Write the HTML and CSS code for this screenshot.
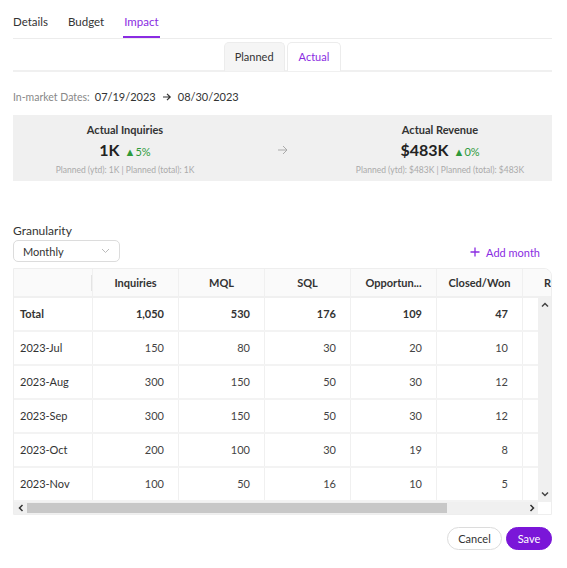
FILE: index.html
```html
<!DOCTYPE html>
<html>
<head>
<meta charset="utf-8">
<link rel="stylesheet" href="styles.css">
</head>
<body>
<div class="page">
  <nav class="tabs">
    <span class="tab">Details</span>
    <span class="tab">Budget</span>
    <span class="tab active">Impact</span>
  </nav>
  <div class="subtabs">
    <span class="subtab">Planned</span>
    <span class="subtab active">Actual</span>
  </div>
  <div class="dates">
    <span class="dates-label">In-market Dates:</span>
    <span class="dates-val">07/19/2023</span>
    <svg class="dates-arrow" width="10" height="10" viewBox="0 0 10 10"><path d="M1 5h7M5 1.8 8.2 5 5 8.2" fill="none" stroke="#333" stroke-width="1.2"/></svg>
    <span class="dates-val">08/30/2023</span>
  </div>
  <div class="summary">
    <div class="metric">
      <div class="metric-title">Actual Inquiries</div>
      <div class="metric-value"><span class="big">1K</span><span class="delta">&#9650;5%</span></div>
      <div class="metric-sub">Planned (ytd): 1K | Planned (total): 1K</div>
    </div>
    <div class="summary-arrow">
      <svg width="12" height="10" viewBox="0 0 12 10"><path d="M1 5h9M6 1l4 4-4 4" fill="none" stroke="#aaa" stroke-width="1"/></svg>
    </div>
    <div class="metric">
      <div class="metric-title">Actual Revenue</div>
      <div class="metric-value"><span class="big">$483K</span><span class="delta">&#9650;0%</span></div>
      <div class="metric-sub">Planned (ytd): $483K | Planned (total): $483K</div>
    </div>
  </div>
  <div class="gran-label">Granularity</div>
  <div class="controls">
    <div class="select">
      <span>Monthly</span>
      <svg width="9" height="6" viewBox="0 0 9 6"><path d="M1 1l3.5 3.5L8 1" fill="none" stroke="#bbb" stroke-width="1"/></svg>
    </div>
    <div class="add">
      <svg width="10" height="10" viewBox="0 0 10 10"><path d="M5 0.5v9M0.5 5h9" stroke="#8a2be2" stroke-width="1.3"/></svg>
      <span>Add month</span>
    </div>
  </div>
  <div class="grid">
    <div class="ghead">
      <div class="hc first"><span class="sep"></span></div>
      <div class="hc">Inquiries</div>
      <div class="hc">MQL</div>
      <div class="hc">SQL</div>
      <div class="hc">Opportun...</div>
      <div class="hc">Closed/Won</div>
      <div class="hc last">R</div>
    </div>
    <div class="gbody">
      <div class="rows">
        <div class="row total"><div class="c first">Total</div><div class="c">1,050</div><div class="c">530</div><div class="c">176</div><div class="c">109</div><div class="c">47</div><div class="c"></div></div>
        <div class="row"><div class="c first">2023-Jul</div><div class="c">150</div><div class="c">80</div><div class="c">30</div><div class="c">20</div><div class="c">10</div><div class="c"></div></div>
        <div class="row"><div class="c first">2023-Aug</div><div class="c">300</div><div class="c">150</div><div class="c">50</div><div class="c">30</div><div class="c">12</div><div class="c"></div></div>
        <div class="row"><div class="c first">2023-Sep</div><div class="c">300</div><div class="c">150</div><div class="c">50</div><div class="c">30</div><div class="c">12</div><div class="c"></div></div>
        <div class="row"><div class="c first">2023-Oct</div><div class="c">200</div><div class="c">100</div><div class="c">30</div><div class="c">19</div><div class="c">8</div><div class="c"></div></div>
        <div class="row"><div class="c first">2023-Nov</div><div class="c">100</div><div class="c">50</div><div class="c">16</div><div class="c">10</div><div class="c">5</div><div class="c"></div></div>
      </div>
      <div class="vscroll">
        <svg width="8" height="6" viewBox="0 0 8 6"><path d="M1 4.5 4 1.5l3 3" fill="none" stroke="#444" stroke-width="1.5"/></svg>
        <svg width="8" height="6" viewBox="0 0 8 6"><path d="M1 1.5 4 4.5l3-3" fill="none" stroke="#444" stroke-width="1.5"/></svg>
      </div>
    </div>
    <div class="hscroll">
      <div class="harrow"><svg width="6" height="8" viewBox="0 0 6 8"><path d="M4.5 1 1.5 4l3 3" fill="none" stroke="#333" stroke-width="1.5"/></svg></div>
      <div class="htrack"><div class="hthumb"></div></div>
      <div class="harrow"><svg width="6" height="8" viewBox="0 0 6 8"><path d="M1.5 1l3 3-3 3" fill="none" stroke="#333" stroke-width="1.5"/></svg></div>
      <div class="corner"></div>
    </div>
  </div>
  <div class="actions">
    <button class="btn cancel">Cancel</button>
    <button class="btn save">Save</button>
  </div>
</div>
</body>
</html>
```

FILE: styles.css
```css
* { box-sizing: border-box; }
html, body { margin: 0; padding: 0; background: #fff; }
body { font-family: Lato, "Noto Sans", "Liberation Sans", sans-serif; color: #333; }
.page { width: 567px; padding: 0 15px 0 13px; }

.tabs { display: flex; height: 39px; border-bottom: 1px solid #ececec; padding-top: 13px; }
.tab { font-size: 11.5px; height: 25px; line-height: 18px; margin-right: 20px; color: #333; }
.tab.active { color: #8a2be2; border-bottom: 2px solid #8a2be2; padding: 0 1px; margin-left: -1px; }

.subtabs { display: flex; justify-content: center; gap: 2px; padding-top: 3px; border-bottom: 2px solid #f0f0f0; height: 33px; }
.subtab { font-size: 11px; height: 29px; line-height: 28px; padding: 0 10px; border: 1px solid #ececec; border-bottom: none; border-radius: 5px 5px 0 0; background: #f5f5f5; color: #333; }
.subtab.active { background: #fff; color: #8a2be2; padding: 0 11px; margin-bottom: -2px; height: 29px; }

.dates { display: flex; align-items: center; gap: 5px; font-size: 10.5px; height: 17px; margin-top: 16px; }
.dates-label { color: #888; }
.dates-val { color: #333; font-size: 11px; }
.dates-arrow { margin: 0 1px; }

.summary { display: grid; grid-template-columns: 1fr 91px 1fr; align-items: center; background: #f0f0f0; height: 66px; margin-top: 10px; padding-top: 3px; }
.metric { text-align: center; }
.metric-title { font-size: 11px; font-weight: 700; color: #333; line-height: 14px; }
.metric-value { display: flex; justify-content: center; align-items: baseline; gap: 5px; margin-top: 3px; line-height: 20px; }
.big { font-size: 16px; font-weight: 700; color: #222; }
.delta { font-size: 11px; color: #2e9a3a; }
.metric-sub { font-size: 8.5px; color: #aaa; margin-top: 2px; line-height: 12px; }
.summary-arrow { display: flex; justify-content: center; }

.gran-label { font-size: 12px; margin-top: 42px; line-height: 15px; color: #333; }
.controls { display: flex; justify-content: space-between; align-items: center; margin-top: 2px; }
.select { width: 107px; height: 22px; border: 1px solid #dcdcdc; border-radius: 5px; display: flex; align-items: center; justify-content: space-between; padding: 0 9px; font-size: 11px; color: #333; }
.add { display: flex; align-items: center; gap: 6px; color: #8a2be2; font-size: 11px; padding-right: 12px; padding-top: 2px; }

.grid { margin-top: 6px; border: 1px solid #eee; border-radius: 0 8px 0 0; overflow: hidden; width: 539px; }
.ghead { display: flex; height: 29px; background: #fafafa; border-bottom: 2px solid #f0f0f0; overflow: hidden; }
.hc { flex: 0 0 86px; font-size: 11px; font-weight: 700; text-align: center; line-height: 27px; border-left: 1px solid #f0f0f0; color: #333; white-space: nowrap; overflow: hidden; }
.hc.first { flex: 0 0 78px; border-left: none; position: relative; }
.hc.last { flex: 1 1 auto; text-align: right; padding-right: 0; }
.sep { position: absolute; right: 0; top: 6px; height: 16px; border-right: 1px solid #e4e4e4; }

.gbody { display: flex; height: 204px; }
.rows { flex: 1; overflow: hidden; }
.row { display: flex; height: 34px; border-bottom: 2px solid #f3f3f3; }
.c { flex: 0 0 86px; font-size: 11px; text-align: right; padding-right: 14px; line-height: 32px; border-left: 1px solid #f0f0f0; color: #444; }
.c.first { flex: 0 0 78px; border-left: none; text-align: left; padding-left: 6px; color: #333; }
.row.total .c { font-weight: 700; color: #333; }
.vscroll { flex: 0 0 13px; background: #f0f0f0; display: flex; flex-direction: column; justify-content: space-between; align-items: center; padding: 4px 0 5px; }

.hscroll { display: flex; height: 12px; background: #f0f0f0; }
.harrow { flex: 0 0 13px; display: flex; align-items: center; justify-content: center; }
.htrack { flex: 1; display: flex; align-items: stretch; padding: 1px 0; }
.hthumb { width: 420px; background: #c8c8c8; }
.corner { flex: 0 0 13px; background: #fff; }

.actions { display: flex; justify-content: flex-end; gap: 4px; margin-top: 12px; }
.btn { font-family: inherit; font-size: 11px; height: 23px; border-radius: 12px; padding: 0; cursor: pointer; }
.cancel { width: 55px; background: #fff; border: 1px solid #dcdcdc; color: #333; }
.save { width: 46px; background: #7a16d8; border: 1px solid #7a16d8; color: #fff; }
```
